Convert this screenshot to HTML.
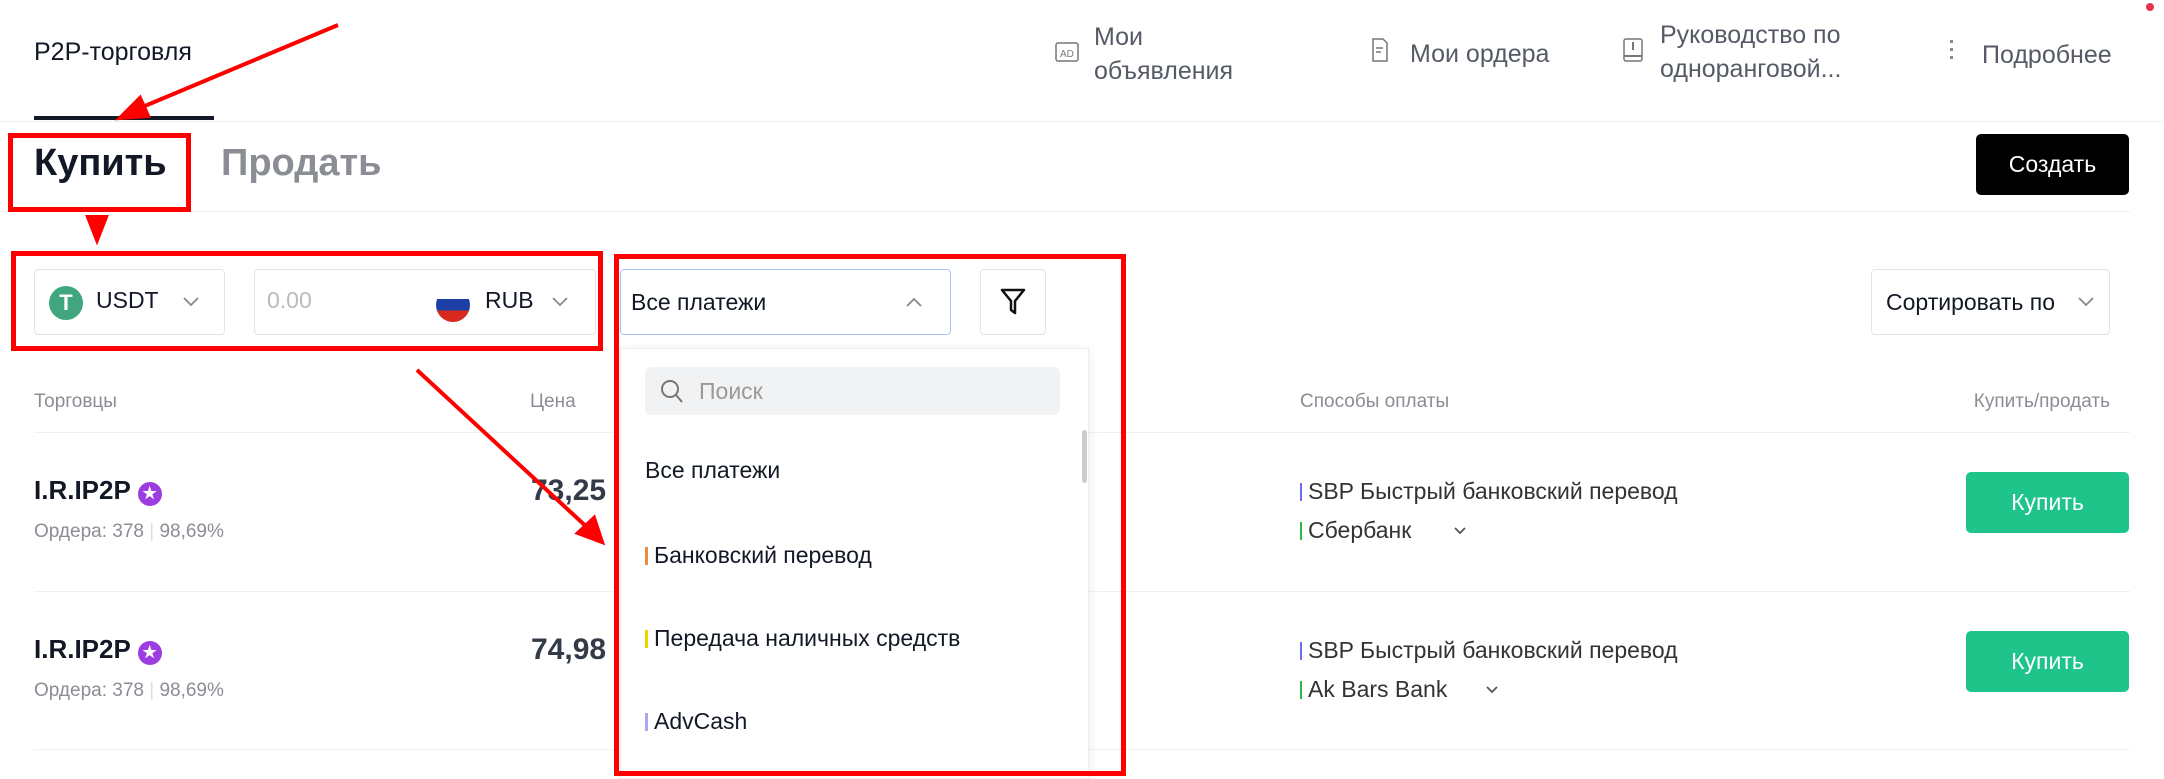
<!DOCTYPE html>
<html><head><meta charset="utf-8"><style>
*{margin:0;padding:0;box-sizing:border-box}
body{width:2164px;height:779px;background:#fff;font-family:"Liberation Sans","Noto Sans CJK SC",sans-serif;color:#121826;position:relative;overflow:hidden}
.a{position:absolute;white-space:nowrap}
.box{position:absolute;border:1px solid #e2e4e8;border-radius:4px}
.red{position:absolute;border:5px solid #f00}
.line{position:absolute;height:1px;background:#eef0f2}
.nav{font-size:25px;color:#555a66;line-height:34px}
.bar{display:inline-block;width:3px;height:18px;margin-right:6px;vertical-align:-2px}
.btn{position:absolute;background:#1ec48a;color:#fff;border-radius:5px;font-size:23px;display:flex;align-items:center;justify-content:center}
.chev{position:absolute}
</style></head><body>
<div class="a" style="left:34px;top:38px;font-size:25px">P2P-торговля</div>
<div class="a" style="left:34px;top:116px;width:180px;height:4px;background:#121826"></div>
<div class="line" style="left:0;top:121px;width:2164px"></div>

<svg class="a" style="left:1055px;top:42px" width="24" height="20"><rect x="1" y="1" width="22" height="18" rx="2" fill="none" stroke="#777" stroke-width="1.5"/><text x="5" y="15" font-size="10" fill="#777" font-family="Liberation Sans">AD</text></svg>
<div class="a nav" style="left:1094px;top:20px">Мои<br>объявления</div>
<svg class="a" style="left:1371px;top:38px" width="18" height="24"><path d="M2 1h10l4 4v18H2z" fill="none" stroke="#777" stroke-width="1.5"/><path d="M5 10h7M5 14h5" stroke="#777" stroke-width="1.5"/></svg>
<div class="a nav" style="left:1410px;top:37px">Мои ордера</div>
<svg class="a" style="left:1623px;top:38px" width="20" height="24"><rect x="1" y="1" width="18" height="22" rx="2" fill="none" stroke="#777" stroke-width="1.5"/><path d="M10 4v8M1 18h18" stroke="#777" stroke-width="2"/></svg>
<div class="a nav" style="left:1660px;top:18px">Руководство по<br>одноранговой...</div>
<div class="a" style="left:1950px;top:40px;width:3px;line-height:0"><div style="width:3px;height:3px;background:#888;margin-bottom:5px"></div><div style="width:3px;height:3px;background:#888;margin-bottom:5px"></div><div style="width:3px;height:3px;background:#888"></div></div>
<div class="a nav" style="left:1982px;top:38px">Подробнее</div>
<div class="a" style="left:2146px;top:3px;width:8px;height:8px;border-radius:50%;background:#e8344a"></div>

<div class="a" style="left:34px;top:142px;font-size:38px;font-weight:bold">Купить</div>
<div class="a" style="left:221px;top:142px;font-size:38px;font-weight:bold;color:#8a8d94">Продать</div>
<div class="a" style="left:1976px;top:134px;width:153px;height:61px;background:#000;border-radius:5px;color:#fff;font-size:23px;display:flex;align-items:center;justify-content:center">Создать</div>
<div class="line" style="left:0;top:211px;width:2130px"></div>

<div class="box" style="left:34px;top:269px;width:191px;height:66px"></div>
<div class="a" style="left:49px;top:286px;width:34px;height:34px;border-radius:50%;background:#3fa67f;color:#fff;font-weight:bold;font-size:22px;text-align:center;line-height:34px">T</div>
<div class="a" style="left:96px;top:287px;font-size:23px">USDT</div>
<svg class="chev" style="left:182px;top:296px" width="18" height="12"><path d="M2 2l7 7 7-7" fill="none" stroke="#888" stroke-width="1.8"/></svg>
<div class="box" style="left:254px;top:269px;width:342px;height:66px"></div>
<div class="a" style="left:267px;top:287px;font-size:23px;color:#bbb">0.00</div>
<div class="a" style="left:436px;top:288px;width:34px;height:34px;border-radius:50%;overflow:hidden;background:linear-gradient(#fff 0 33%,#1c3fa8 33% 66%,#d8281f 66%)"></div>
<div class="a" style="left:485px;top:287px;font-size:23px">RUB</div>
<svg class="chev" style="left:551px;top:296px" width="18" height="12"><path d="M2 2l7 7 7-7" fill="none" stroke="#888" stroke-width="1.8"/></svg>
<div class="red" style="left:11px;top:251px;width:592px;height:100px"></div>

<div class="box" style="left:620px;top:269px;width:331px;height:66px;border-color:#a9c4f5"></div>
<div class="a" style="left:631px;top:289px;font-size:23px">Все платежи</div>
<svg class="chev" style="left:905px;top:296px" width="18" height="12"><path d="M2 10l7-7 7 7" fill="none" stroke="#888" stroke-width="1.8"/></svg>
<div class="box" style="left:980px;top:269px;width:66px;height:66px"></div>
<svg class="a" style="left:1000px;top:288px" width="26" height="28"><path d="M2 2h22l-9 11v12l-4-3V13z" fill="none" stroke="#111" stroke-width="2.5" stroke-linejoin="round"/></svg>
<div class="box" style="left:1871px;top:269px;width:239px;height:66px"></div>
<div class="a" style="left:1886px;top:289px;font-size:23px">Сортировать по</div>
<svg class="chev" style="left:2077px;top:296px" width="18" height="12"><path d="M2 2l7 7 7-7" fill="none" stroke="#888" stroke-width="1.8"/></svg>

<div class="a" style="left:34px;top:391px;font-size:19px;color:#8a8d94">Торговцы</div>
<div class="a" style="left:530px;top:391px;font-size:19px;color:#8a8d94">Цена</div>
<div class="a" style="left:1300px;top:391px;font-size:19px;color:#8a8d94">Способы оплаты</div>
<div class="a" style="right:54px;top:391px;font-size:19px;color:#8a8d94">Купить/продать</div>
<div class="line" style="left:34px;top:432px;width:2096px"></div>

<div class="a" style="left:34px;top:475px;font-size:26px;font-weight:bold">I.R.IP2P <span style="display:inline-block;width:24px;height:24px;border-radius:50%;background:#9b3de0;color:#fff;font-size:15px;text-align:center;line-height:24px;vertical-align:1px">★</span></div>
<div class="a" style="left:34px;top:521px;font-size:19px;color:#8a8d94">Ордера: 378 <span style="color:#ddd">|</span> 98,69%</div>
<div class="a" style="left:531px;top:474px;font-size:30px;font-weight:bold;color:#333a48">73,25</div>
<div class="a" style="left:1300px;top:478px;font-size:23px;color:#333"><span class="bar" style="background:#6b6ef0;width:2px"></span>SBP Быстрый банковский перевод</div>
<div class="a" style="left:1300px;top:517px;font-size:23px;color:#333"><span class="bar" style="background:#2db84a;width:2px"></span>Сбербанк</div>
<svg class="chev" style="left:1453px;top:526px" width="14" height="10"><path d="M2 2l5 5 5-5" fill="none" stroke="#555" stroke-width="1.8"/></svg>
<div class="btn" style="left:1966px;top:472px;width:163px;height:61px">Купить</div>
<div class="line" style="left:34px;top:591px;width:2096px"></div>

<div class="a" style="left:34px;top:634px;font-size:26px;font-weight:bold">I.R.IP2P <span style="display:inline-block;width:24px;height:24px;border-radius:50%;background:#9b3de0;color:#fff;font-size:15px;text-align:center;line-height:24px;vertical-align:1px">★</span></div>
<div class="a" style="left:34px;top:680px;font-size:19px;color:#8a8d94">Ордера: 378 <span style="color:#ddd">|</span> 98,69%</div>
<div class="a" style="left:531px;top:633px;font-size:30px;font-weight:bold;color:#333a48">74,98</div>
<div class="a" style="left:1300px;top:637px;font-size:23px;color:#333"><span class="bar" style="background:#6b6ef0;width:2px"></span>SBP Быстрый банковский перевод</div>
<div class="a" style="left:1300px;top:676px;font-size:23px;color:#333"><span class="bar" style="background:#2db84a;width:2px"></span>Ak Bars Bank</div>
<svg class="chev" style="left:1485px;top:685px" width="14" height="10"><path d="M2 2l5 5 5-5" fill="none" stroke="#555" stroke-width="1.8"/></svg>
<div class="btn" style="left:1966px;top:631px;width:163px;height:61px">Купить</div>
<div class="line" style="left:34px;top:749px;width:2096px"></div>

<div class="a" style="left:620px;top:348px;width:469px;height:431px;background:#fff;border:1px solid #eee;box-shadow:0 2px 10px rgba(0,0,0,.08)"></div>
<div class="a" style="left:645px;top:367px;width:415px;height:48px;background:#f1f2f4;border-radius:6px"></div>
<svg class="a" style="left:660px;top:379px" width="24" height="26"><circle cx="10" cy="10" r="8" fill="none" stroke="#777" stroke-width="2"/><path d="M16 16l6 7" stroke="#777" stroke-width="2"/></svg>
<div class="a" style="left:699px;top:378px;font-size:23px;color:#999">Поиск</div>
<div class="a" style="left:1082px;top:430px;width:5px;height:53px;background:#ccc;border-radius:3px"></div>
<div class="a" style="left:645px;top:457px;font-size:23px">Все платежи</div>
<div class="a" style="left:645px;top:542px;font-size:23px"><span class="bar" style="background:#f08c3c"></span>Банковский перевод</div>
<div class="a" style="left:645px;top:625px;font-size:23px"><span class="bar" style="background:#f5d000"></span>Передача наличных средств</div>
<div class="a" style="left:645px;top:708px;font-size:23px"><span class="bar" style="background:#a9a9f5"></span>AdvCash</div>
<div class="red" style="left:614px;top:254px;width:512px;height:522px"></div>
<div class="red" style="left:8px;top:133px;width:183px;height:79px"></div>

<svg class="a" style="left:0;top:0" width="2164" height="779">
<g stroke="#f00" stroke-width="4" fill="#f00">
<line x1="338" y1="25" x2="140" y2="108"/><polygon points="120,118 140,98 148,116" />
<polygon points="88,217 106,217 97,240"/>
<line x1="417" y1="370" x2="590" y2="530"/><polygon points="602,542 578,533 594,518"/>
</g></svg>
</body></html>
